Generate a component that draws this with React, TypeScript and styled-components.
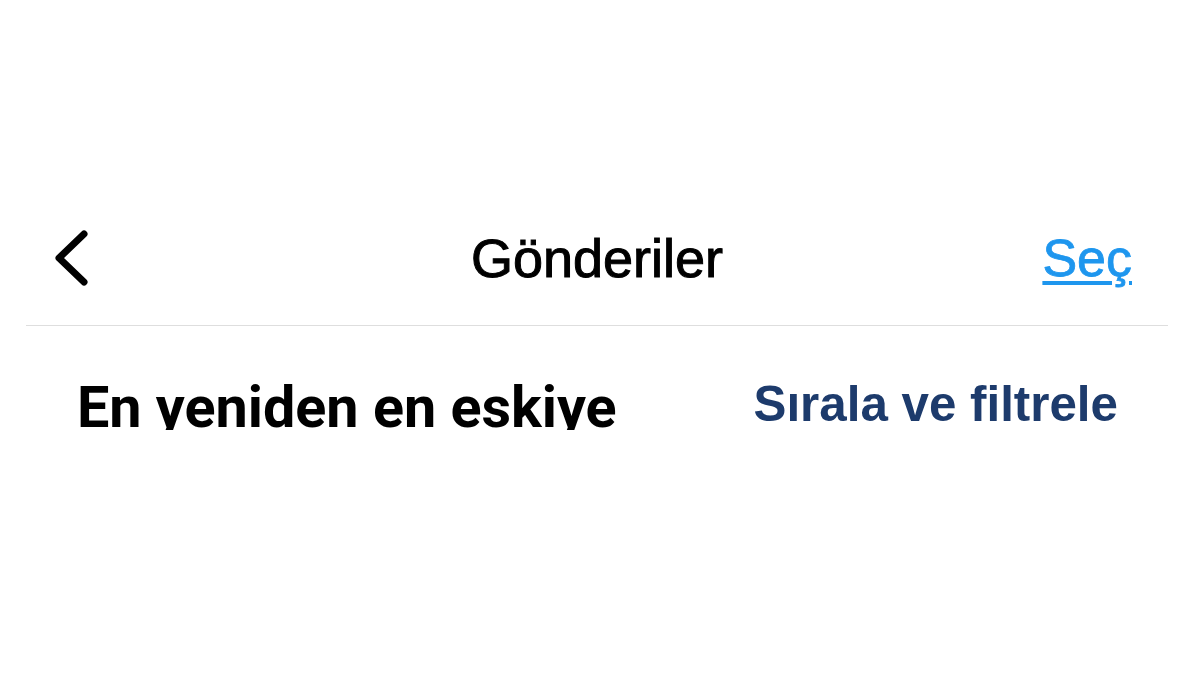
import * as React from 'react';
import styled, { createGlobalStyle } from 'styled-components';

const GlobalStyle = createGlobalStyle`
  html, body {
    margin: 0;
    padding: 0;
    background: #ffffff;
  }
  body {
    font-family: 'Liberation Sans', Arial, sans-serif;
  }
`;

const BackIcon: React.FC = () => (
  <svg width={40} height={60} viewBox="0 0 40 60" fill="none">
    <path
      d="M34 6 L9 30 L34 54"
      stroke="#000"
      strokeWidth={7}
      strokeLinecap="round"
      strokeLinejoin="round"
    />
  </svg>
);

const App: React.FC = () => {
  return (
    <>
      <GlobalStyle />
      <Styled.Page>
        <Styled.Header>
          <Styled.BackButton aria-label="Geri">
            <BackIcon />
          </Styled.BackButton>
          <Styled.Title>Gönderiler</Styled.Title>
          <Styled.SelectLink href="#">Seç</Styled.SelectLink>
        </Styled.Header>
        <Styled.SortRow>
          <Styled.SortLabel>En yeniden en eskiye</Styled.SortLabel>
          <Styled.FilterButton>Sırala ve filtrele</Styled.FilterButton>
        </Styled.SortRow>
      </Styled.Page>
    </>
  );
};

const Styled = {
  Page: styled.div`
    width: 1200px;
    height: 675px;
    padding-top: 191px;
    box-sizing: border-box;
    background: #ffffff;
  `,
  Header: styled.header`
    display: grid;
    grid-template-columns: 1fr auto 1fr;
    align-items: center;
    height: 134px;
    margin: 0 32px 0 26px;
    padding: 0 24px;
    border-bottom: 1px solid #dedede;
  `,
  BackButton: styled.button`
    justify-self: start;
    display: flex;
    padding: 0;
    border: none;
    background: none;
    cursor: pointer;
  `,
  Title: styled.h1`
    margin: 0;
    font-family: 'Liberation Sans', Arial, sans-serif;
    font-size: 54px;
    font-weight: 400;
    line-height: 1;
    color: #000;
    -webkit-text-stroke: 1px #000;
  `,
  SelectLink: styled.a`
    justify-self: end;
    margin-right: 12px;
    font-family: 'Liberation Sans', Arial, sans-serif;
    font-size: 52px;
    line-height: 1;
    color: #1e96ee;
    text-decoration: underline;
    text-decoration-thickness: 4px;
    text-underline-offset: 5px;
    -webkit-text-stroke: 0.8px #1e96ee;
  `,
  SortRow: styled.div`
    display: flex;
    justify-content: space-between;
    align-items: flex-start;
    height: 104px;
    margin: 0 32px 0 26px;
    padding: 0 50px 0 51px;
    overflow: hidden;
  `,
  SortLabel: styled.div`
    padding-top: 53px;
    font-family: Roboto, 'Liberation Sans', sans-serif;
    font-size: 57.5px;
    font-weight: 700;
    line-height: 1;
    color: #000;
  `,
  FilterButton: styled.button`
    padding: 53px 0 0;
    border: none;
    background: none;
    font-family: 'Liberation Sans', Arial, sans-serif;
    font-size: 49.3px;
    font-weight: 700;
    line-height: 1;
    color: #1d3b6c;
    cursor: pointer;
  `,
};

export default App;
